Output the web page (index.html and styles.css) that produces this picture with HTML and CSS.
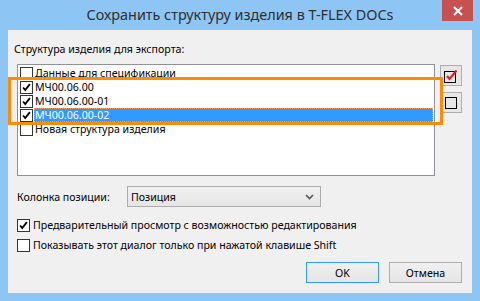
FILE: index.html
```html
<!DOCTYPE html>
<html lang="ru">
<head>
<meta charset="utf-8">
<title>Сохранить структуру изделия в T-FLEX DOCs</title>
<link rel="stylesheet" href="styles.css">
</head>
<body>
<div class="window">
  <div class="titlebar">
    <span class="title">Сохранить структуру изделия в T-FLEX DOCs</span>
    <button class="close" aria-label="Закрыть">
      <svg width="10" height="10" viewBox="0 0 10 10"><path d="M1 1 L9 9 M9 1 L1 9" stroke="#fff" stroke-width="2"/></svg>
    </button>
  </div>
  <div class="client">
    <div class="section-label">Структура изделия для экспорта:</div>
    <div class="list-row">
      <div class="listbox">
        <div class="item"><span class="cb"></span><span class="txt">Данные для спецификации</span></div>
        <div class="item"><span class="cb checked"><svg viewBox="0 0 13 13"><path d="M2.5 6.5 L5 9.5 L10.5 2.5" fill="none" stroke="#000" stroke-width="2.2"/></svg></span><span class="txt">МЧ00.06.00</span></div>
        <div class="item"><span class="cb checked"><svg viewBox="0 0 13 13"><path d="M2.5 6.5 L5 9.5 L10.5 2.5" fill="none" stroke="#000" stroke-width="2.2"/></svg></span><span class="txt">МЧ00.06.00-01</span></div>
        <div class="item"><span class="cb checked"><svg viewBox="0 0 13 13"><path d="M2.5 6.5 L5 9.5 L10.5 2.5" fill="none" stroke="#000" stroke-width="2.2"/></svg></span><span class="txt selected">МЧ00.06.00-02</span></div>
        <div class="item"><span class="cb"></span><span class="txt">Новая структура изделия</span></div>
      </div>
      <div class="side-tools">
        <button class="tool" aria-label="Отметить все">
          <svg width="16" height="16" viewBox="0 0 16 16"><rect x="1.5" y="3.5" width="11" height="11" fill="none" stroke="#000"/><path d="M4 8 L6.5 11 L13.5 2.5" fill="none" stroke="#e8141b" stroke-width="2"/></svg>
        </button>
        <button class="tool" aria-label="Снять все">
          <svg width="16" height="16" viewBox="0 0 16 16"><rect x="2.5" y="2.5" width="11" height="11" fill="none" stroke="#000"/></svg>
        </button>
      </div>
      <div class="highlight"></div>
    </div>
    <div class="field-row">
      <span class="field-label">Колонка позиции:</span>
      <div class="combo">
        <span>Позиция</span>
        <svg width="9" height="6" viewBox="0 0 9 6"><path d="M1 1 L4.5 4.5 L8 1" fill="none" stroke="#555" stroke-width="1.6"/></svg>
      </div>
    </div>
    <div class="checks">
      <div class="check-row"><span class="cb checked"><svg viewBox="0 0 13 13"><path d="M2.5 6.5 L5 9.5 L10.5 2.5" fill="none" stroke="#000" stroke-width="2.2"/></svg></span><span>Предварительный просмотр с возможностью редактирования</span></div>
      <div class="check-row"><span class="cb"></span><span>Показывать этот диалог только при нажатой клавише Shift</span></div>
    </div>
    <div class="buttons">
      <button class="btn default">OK</button>
      <button class="btn">Отмена</button>
    </div>
  </div>
</div>
</body>
</html>
```
FILE: styles.css
```css
* { box-sizing: border-box; }
html, body { margin: 0; padding: 0; }
body {
  width: 480px;
  height: 301px;
  overflow: hidden;
  font-family: "Noto Sans", "Open Sans", sans-serif;
  font-size: 10.6px;
  color: #000;
}
.window {
  width: 480px;
  height: 301px;
  background: #8dc5f4;
  padding: 0 8px 8px 8px;
  display: flex;
  flex-direction: column;
}
.titlebar {
  height: 30px;
  position: relative;
  display: flex;
  justify-content: center;
  align-items: flex-start;
}
.title {
  font-size: 14.4px;
  color: #2f2f2f;
  line-height: 20px;
  margin-top: 5px;
}
.close {
  position: absolute;
  top: 0;
  right: -1px;
  width: 31px;
  height: 21px;
  border: 0;
  padding: 0;
  background: #c75050;
  display: flex;
  align-items: center;
  justify-content: center;
}
.client {
  flex: 1;
  background: #f0f0f0;
  padding: 12px 10px 0 9px;
  display: flex;
  flex-direction: column;
}
.section-label {
  line-height: 15px;
  margin-left: -3px;
}
.list-row {
  margin-top: 7px;
  display: flex;
  position: relative;
}
.listbox {
  width: 422px;
  height: 112px;
  border: 1px solid #8f9197;
  background: #fff;
  padding: 1px 0 0 2px;
}
.item {
  height: 14px;
  display: flex;
  align-items: center;
}
.cb {
  width: 13px;
  height: 13px;
  border: 1px solid #333;
  background: #fff;
  flex: none;
  display: block;
}
.cb svg { display: block; width: 11px; height: 11px; }
.item .txt {
  margin-left: 1px;
  height: 14px;
  line-height: 14px;
  padding: 0 1px;
}
.item .txt.selected {
  flex: 1;
  background: #3399ff;
  color: #fff;
  outline: 1px dotted #f29a5a;
  outline-offset: -1px;
  margin-right: 1px;
}
.side-tools {
  margin-left: 5px;
  padding-top: 1px;
  display: flex;
  flex-direction: column;
  gap: 6px;
}
.tool {
  width: 22px;
  height: 21px;
  border: 1px solid #adadad;
  background: #e7e7e7;
  padding: 0;
  display: flex;
  align-items: center;
  justify-content: center;
}
.highlight {
  position: absolute;
  left: -9px;
  top: 13px;
  width: 435px;
  height: 48px;
  border: 3px solid #ff8c00;
  pointer-events: none;
}
.field-row {
  margin-top: 10px;
  display: flex;
  align-items: center;
  height: 21px;
}
.field-label {
  width: 110px;
}
.combo {
  width: 194px;
  height: 21px;
  border: 1px solid #acacac;
  background: linear-gradient(#f0f0f0, #e5e5e5);
  display: flex;
  align-items: center;
  justify-content: space-between;
  padding: 0 6px 0 3px;
}
.checks {
  margin-top: 9px;
  display: flex;
  flex-direction: column;
}
.check-row {
  height: 20px;
  display: flex;
  align-items: flex-start;
  gap: 3px;
}
.check-row .cb { margin-top: 3px; }
.check-row span:last-child { line-height: 19px; }
.buttons {
  margin-top: 6px;
  display: flex;
  justify-content: flex-end;
  gap: 10px;
}
.btn {
  width: 73px;
  height: 21px;
  border: 1px solid #adadad;
  background: linear-gradient(#f0f0f0, #e5e5e5);
  font-family: inherit;
  font-size: 10.6px;
  padding: 0;
  color: #000;
}
.btn.default { border-color: #3399ff; }
```
